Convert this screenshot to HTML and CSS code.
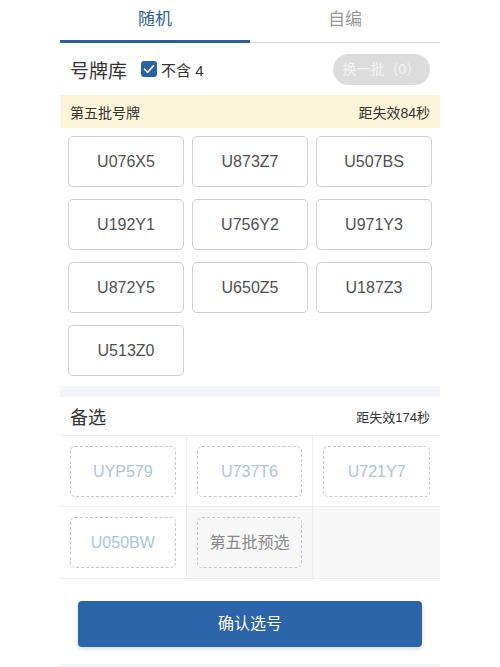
FILE: index.html
```html
<!DOCTYPE html>
<html>
<head>
    <meta charset="UTF-8">
    <title>选号</title>
    <link rel="stylesheet" href="styles.css">
</head>
<body>
<div class="page">
    <!--顶部切换-->
    <div class="tabs">
        <div class="tab active">随机</div>
        <div class="tab">自编</div>
    </div>

    <!--号牌库-->
    <div class="lib-head">
        <span class="lib-title">号牌库</span>
        <label class="check">
            <em class="box-icon">
                <svg width="12" height="12" viewBox="0 0 12 12"><path d="M1.5 6.2 L4.6 9.2 L10.6 2.6" fill="none" stroke="#fff" stroke-width="1.6" stroke-linecap="round" stroke-linejoin="round"/></svg>
            </em>
            <span>不含 4</span>
        </label>
        <span class="btn-change">换一批（0）</span>
    </div>

    <div class="batch">
        <span>第五批号牌</span>
        <span>距失效84秒</span>
    </div>

    <ul class="plates">
        <li>U076X5</li>
        <li>U873Z7</li>
        <li>U507BS</li>
        <li>U192Y1</li>
        <li>U756Y2</li>
        <li>U971Y3</li>
        <li>U872Y5</li>
        <li>U650Z5</li>
        <li>U187Z3</li>
        <li>U513Z0</li>
    </ul>

    <div class="gap"></div>

    <!--备选-->
    <div class="alt-head">
        <span class="alt-title">备选</span>
        <span class="alt-time">距失效174秒</span>
    </div>
    <ul class="alts">
        <li><span class="slot">UYP579</span></li>
        <li><span class="slot">U737T6</span></li>
        <li><span class="slot">U721Y7</span></li>
        <li><span class="slot">U050BW</span></li>
        <li class="grey"><span class="slot pre">第五批预选</span></li>
        <li class="grey"></li>
    </ul>

    <div class="confirm-wrap">
        <div class="confirm">确认选号</div>
    </div>
    <div class="foot"></div>
</div>
</body>
</html>
```

FILE: styles.css
```css
* {
    margin: 0;
    padding: 0;
    box-sizing: border-box;
}

body {
    background: #fff;
    font-family: "Liberation Sans", "Noto Sans CJK SC", sans-serif;
    color: #333;
}

ul, li {
    list-style: none;
}

.page {
    width: 380px;
    margin: 0 auto;
}

/*tabs*/
.tabs {
    display: flex;
    height: 43px;
    border-bottom: 1px solid #d6d9de;
}

.tab {
    flex: 1;
    text-align: center;
    font-size: 17px;
    line-height: 40px;
    color: #9a9a9a;
}

.tab.active {
    color: #2d5f9e;
    border-bottom: 3px solid #2d5f9e;
    margin-bottom: -1px;
}

/*号牌库*/
.lib-head {
    display: flex;
    align-items: center;
    height: 52px;
    padding: 0 10px;
}

.lib-title {
    font-size: 19px;
    color: #333;
    margin-right: 14px;
}

.check {
    display: flex;
    align-items: center;
    font-size: 15px;
    color: #333;
}

.box-icon {
    display: flex;
    align-items: center;
    justify-content: center;
    width: 16px;
    height: 16px;
    border-radius: 3px;
    background: #2a62a6;
    margin-right: 4px;
}

.btn-change {
    margin-left: auto;
    width: 97px;
    height: 31px;
    line-height: 31px;
    border-radius: 16px;
    background: #dcdcdc;
    color: #f3f3f3;
    font-size: 14px;
    text-align: center;
}

.batch {
    display: flex;
    justify-content: space-between;
    align-items: center;
    height: 33px;
    padding: 0 10px;
    background: #fdf5da;
    font-size: 14px;
    color: #333;
}

.plates {
    display: grid;
    grid-template-columns: repeat(3, 116px);
    column-gap: 8px;
    row-gap: 12px;
    padding: 8px 8px 10px;
}

.plates li {
    height: 51px;
    line-height: 49px;
    border: 1px solid #cfcfcf;
    border-radius: 5px;
    text-align: center;
    font-size: 16px;
    color: #505050;
}

.gap {
    height: 11px;
    background: #f2f4f7;
}

/*备选*/
.alt-head {
    display: flex;
    justify-content: space-between;
    align-items: center;
    height: 39px;
    padding: 0 10px;
    border-bottom: 1px solid #ececec;
}

.alt-title {
    font-size: 18px;
    color: #333;
}

.alt-time {
    font-size: 13px;
    color: #333;
}

.alts {
    display: grid;
    grid-template-columns: repeat(3, 1fr);
    border-bottom: 1px solid #ececec;
}

.alts li {
    height: 71px;
    padding: 10px;
    border-right: 1px solid #ececec;
    border-bottom: 1px solid #f0f0f0;
}

.alts li:nth-child(3n) {
    border-right: none;
}

.alts li:nth-child(n+4) {
    border-bottom: none;
}

.alts li.grey {
    background: #f7f7f7;
}

.slot {
    display: block;
    height: 51px;
    line-height: 49px;
    border: 1px dashed #c2c8d0;
    border-radius: 5px;
    text-align: center;
    font-size: 16px;
    color: #a9c5de;
}

.slot.pre {
    color: #8a8a8a;
    font-size: 16px;
}

.confirm-wrap {
    padding: 22px 18px 17px;
}

.confirm {
    height: 46px;
    line-height: 46px;
    border-radius: 4px;
    background: #2c64a9;
    box-shadow: 0 2px 4px rgba(0, 0, 0, .15);
    text-align: center;
    font-size: 16px;
    color: #fff;
}

.foot {
    height: 10px;
    background: #f3f4f6;
}
```
